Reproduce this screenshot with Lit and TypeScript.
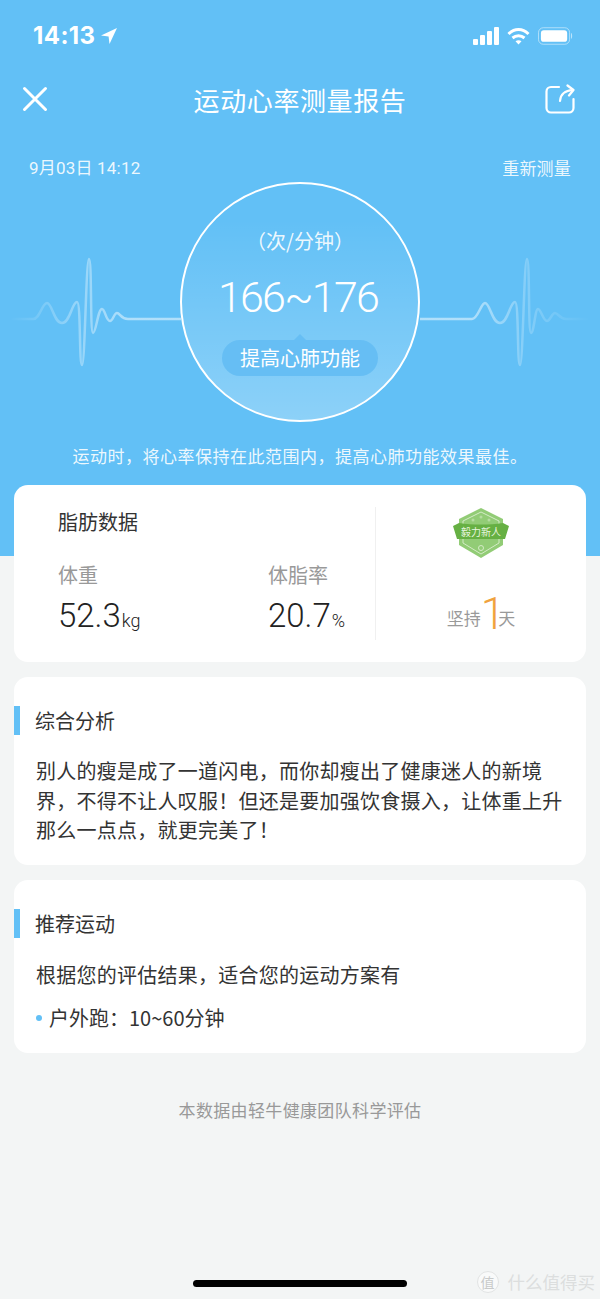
import { LitElement, html, css, svg } from 'lit';
import { customElement } from 'lit/decorators.js';

const ECG_LEFT =
  'M10 319 L33 319 C40 319 42 303 47 303 C52 303 54 323 62 323 C70 323 72 302 77 302 C81 302 79 365 82 365 C85 365 86 259 89 259 C92 259 90 333 93 333 C96 333 98 309 102 309 C105 309 106 321 110 321 C113 321 114 313 117 313 C120 313 121 319 128 319 L181 319';
const ECG_RIGHT =
  'M420 319 L472 319 C478 319 481 303 485 303 C490 303 492 323 500 323 C508 323 510 302 515 302 C519 302 517 365 520 365 C523 365 524 259 527 259 C530 259 528 333 531 333 C534 333 535 309 538 309 C541 309 543 321 547 321 C550 321 552 313 555 313 C558 313 560 319 566 319 L588 319';

@customElement('app-root')
export class AppRoot extends LitElement {
  static styles = css`
    :host {
      display: block;
      position: relative;
      width: 600px;
      height: 1299px;
      overflow: hidden;
      background: #f3f5f5;
      font-family: "Noto Sans CJK SC", "Liberation Sans", sans-serif;
      color: #333;
    }
    .hero {
      height: 556px;
      background: #62c0f6;
      color: #fff;
    }
    .status {
      height: 72px;
      box-sizing: border-box;
      padding: 21px 27px 0 33px;
      display: flex;
      justify-content: space-between;
      align-items: flex-start;
    }
    .clock {
      display: flex;
      align-items: center;
      gap: 6px;
      font: 700 24px/30px Inter, "Liberation Sans", sans-serif;
      letter-spacing: 0.4px;
    }
    .status-icons {
      display: flex;
      align-items: center;
      height: 30px;
    }
    .status-icons .wifi {
      margin: 0 8px 0 7px;
    }
    .nav {
      height: 54px;
      padding: 0 25px 2px;
      display: grid;
      grid-template-columns: 1fr auto 1fr;
      align-items: center;
    }
    .nav .close {
      margin-left: -3px;
    }
    .nav .share {
      justify-self: end;
    }
    .nav h1 {
      margin: 0;
      font-size: 26px;
      font-weight: 400;
      letter-spacing: 0.6px;
    }
    .meta {
      margin-top: 30px;
      height: 20px;
      padding: 0 29px;
      display: flex;
      justify-content: space-between;
      align-items: center;
      font-size: 17px;
      line-height: 20px;
      letter-spacing: 0.2px;
      color: rgba(255, 255, 255, 0.9);
    }
    .meta .date {
      font-family: Roboto, "Noto Sans CJK SC", sans-serif;
    }
    .gauge {
      position: relative;
      margin-top: 4px;
      height: 240px;
      display: flex;
      justify-content: center;
    }
    .ecg {
      position: absolute;
      left: 0;
      top: 0;
      width: 600px;
      height: 240px;
    }
    .dial {
      position: relative;
      width: 240px;
      height: 240px;
      box-sizing: border-box;
      border: 2px solid #fff;
      border-radius: 50%;
      background: linear-gradient(180deg, rgba(255, 255, 255, 0) 15%, rgba(255, 255, 255, 0.27) 100%);
      display: flex;
      flex-direction: column;
      align-items: center;
    }
    .unit {
      margin-top: 43px;
      font-size: 20px;
      line-height: 28px;
      color: rgba(255, 255, 255, 0.9);
    }
    .range {
      margin-top: 14px;
      padding-right: 4px;
      font: 300 43px/56px Roboto, "Liberation Sans", sans-serif;
      letter-spacing: -1.8px;
    }
    .tag {
      position: relative;
      margin-top: 15px;
      width: 156px;
      height: 36px;
      border-radius: 18px;
      background: #66bef4;
      font-size: 20px;
      line-height: 36px;
      text-align: center;
    }
    .tag::before {
      content: '';
      position: absolute;
      left: 72px;
      top: -6px;
      border-left: 6px solid transparent;
      border-right: 6px solid transparent;
      border-bottom: 6px solid #66bef4;
    }
    .hint {
      margin-top: 22px;
      text-align: center;
      font-size: 17px;
      line-height: 24px;
      letter-spacing: 0.5px;
      color: rgba(255, 255, 255, 0.9);
    }
    .cards {
      margin-top: -71px;
      padding: 0 14px;
      display: flex;
      flex-direction: column;
      gap: 15px;
    }
    .card {
      background: #fff;
      border-radius: 14px;
    }
    .fat {
      height: 177px;
      display: flex;
    }
    .fat-main {
      width: 361px;
      box-sizing: border-box;
      padding: 22px 0 0 44px;
    }
    .fat-main h2 {
      margin: 0;
      font-size: 20px;
      line-height: 30px;
      font-weight: 400;
    }
    .stats {
      margin-top: 23px;
      display: flex;
    }
    .stat {
      flex: none;
      width: 210px;
    }
    .stat-label {
      font-size: 20px;
      line-height: 30px;
      color: #999;
    }
    .stat-value {
      margin-top: 5px;
      font: 300 33px/42px Roboto, "Liberation Sans", sans-serif;
      color: #222;
    }
    .stat-value small {
      margin-left: 1px;
      font-size: 18px;
    }
    .streak {
      flex: 1;
      margin: 22px 0;
      border-left: 1px solid #f0f0f0;
      display: flex;
      flex-direction: column;
      align-items: center;
    }
    .days {
      margin-top: 32px;
      display: flex;
      align-items: flex-end;
      color: #999;
      font-size: 17px;
      line-height: 26px;
    }
    .days b {
      font: 300 44px/46px Roboto, "Liberation Sans", sans-serif;
      color: #f0a23e;
      letter-spacing: -7px;
      height: 40px;
    }
    .panel {
      padding: 29px 0 0;
      box-sizing: border-box;
    }
    .panel h3 {
      margin: 0;
      height: 29px;
      border-left: 6px solid #62c0f6;
      padding-left: 15px;
      font-size: 20px;
      line-height: 29px;
      font-weight: 400;
    }
    .panel p {
      margin: 0;
      padding: 0 14px 0 22px;
      font-size: 20px;
      letter-spacing: 0.25px;
    }
    .analysis {
      height: 188px;
    }
    .analysis p {
      margin-top: 21px;
      line-height: 29.5px;
    }
    .advice {
      height: 173px;
    }
    .advice p {
      margin-top: 22px;
      line-height: 30px;
    }
    .advice .item {
      margin: 13px 0 0 22px;
      display: flex;
      align-items: center;
      gap: 7px;
      font-size: 20px;
      line-height: 30px;
    }
    .advice .item::before {
      content: '';
      width: 6px;
      height: 6px;
      border-radius: 50%;
      background: #62c0f6;
    }
    .source {
      margin-top: 45px;
      text-align: center;
      font-size: 17px;
      line-height: 24px;
      letter-spacing: 0.35px;
      color: #999;
    }
    .home-bar {
      position: absolute;
      left: 193px;
      top: 1280px;
      width: 214px;
      height: 7px;
      border-radius: 4px;
      background: #000;
    }
    .watermark {
      position: absolute;
      right: 5px;
      top: 1270px;
      display: flex;
      align-items: center;
      gap: 9px;
      font-size: 17.5px;
      line-height: 24px;
      color: #dcdede;
    }
    .watermark span {
      width: 20px;
      height: 20px;
      border: 1px solid #e2e4e4;
      border-radius: 50%;
      background: #f9fafa;
      color: #c8caca;
      font-size: 14px;
      line-height: 20px;
      text-align: center;
    }
  `;

  private renderStatusIcons() {
    return html`
      <svg width="27" height="18" viewBox="0 0 27 18">
        <rect x="0" y="12" width="5" height="6" rx="1" fill="#fff"></rect>
        <rect x="7" y="8" width="5" height="10" rx="1" fill="#fff"></rect>
        <rect x="14" y="4" width="5" height="14" rx="1" fill="#fff"></rect>
        <rect x="21" y="0" width="5" height="18" rx="1" fill="#fff"></rect>
      </svg>
      <svg class="wifi" width="23" height="17" viewBox="0 0 22 17" fill="none" stroke="#fff" stroke-width="3">
        <path d="M1 6 C7 0 15 0 21 6"></path>
        <path d="M5 10 C8.500 7 13.500 7 17 10"></path>
        <path d="M11 16.500 L8 13.300 C9.800 12 12.200 12 14 13.300 Z" fill="#fff" stroke="none"></path>
      </svg>
      <svg width="35" height="18" viewBox="0 0 36 18">
        <rect x="0.500" y="0.500" width="32" height="17" rx="5" fill="none" stroke="rgba(255,255,255,.5)"></rect>
        <rect x="3" y="3" width="27" height="12" rx="3" fill="#fff"></rect>
        <path d="M34 6 C35.500 6.500 35.500 11.500 34 12 Z" fill="rgba(255,255,255,.6)"></path>
      </svg>
    `;
  }

  private renderEcg() {
    return html`
      <svg class="ecg" viewBox="0 182 600 240" fill="none" stroke-width="2.500" stroke-linejoin="round">
        <defs>
          <linearGradient id="fadeLeft" gradientUnits="userSpaceOnUse" x1="10" y1="0" x2="130" y2="0">
            <stop offset="0" stop-color="#fff" stop-opacity="0"></stop>
            <stop offset="0.5" stop-color="#fff" stop-opacity="0.3"></stop>
            <stop offset="1" stop-color="#fff" stop-opacity="0.5"></stop>
          </linearGradient>
          <linearGradient id="fadeRight" gradientUnits="userSpaceOnUse" x1="590" y1="0" x2="470" y2="0">
            <stop offset="0" stop-color="#fff" stop-opacity="0"></stop>
            <stop offset="0.5" stop-color="#fff" stop-opacity="0.2"></stop>
            <stop offset="1" stop-color="#fff" stop-opacity="0.5"></stop>
          </linearGradient>
        </defs>
        ${svg`<path d=${ECG_LEFT} stroke="url(#fadeLeft)"></path>`}
        ${svg`<path d=${ECG_RIGHT} stroke="url(#fadeRight)"></path>`}
      </svg>
    `;
  }

  private renderBadge() {
    return html`
      <svg width="56" height="52" viewBox="0 0 56 52">
        <path d="M28 1 L50 12 V38 L28 51 L6 38 V12 Z" fill="#92cc76"></path>
        <path d="M28 5 L46 14 V36 L28 47 L10 36 V14 Z" fill="none" stroke="#d4ebc6" stroke-width="1"></path>
        <circle cx="20" cy="13" r="1.500" fill="#b5dca0"></circle>
        <circle cx="28" cy="10" r="1.500" fill="#b5dca0"></circle>
        <circle cx="36" cy="13" r="1.500" fill="#b5dca0"></circle>
        <circle cx="28" cy="41" r="2.500" fill="none" stroke="#d4ebc6"></circle>
        <path d="M0 19 L6 16 C20 18 36 18 50 16 L56 19 L52 32 H4 Z" fill="#66b043"></path>
        <text x="28" y="29" text-anchor="middle" font-size="10" fill="#e8f5df">毅力新人</text>
      </svg>
    `;
  }

  render() {
    return html`
      <section class="hero">
        <div class="status">
          <div class="clock">
            14:13
            <svg width="16" height="16" viewBox="0 0 16 16"><path d="M16 0 L0 7.500 L7.600 8.400 L8.500 16 Z" fill="#fff"></path></svg>
          </div>
          <div class="status-icons">${this.renderStatusIcons()}</div>
        </div>
        <div class="nav">
          <svg class="close" width="26" height="26" viewBox="0 0 26 26" stroke="#fff" stroke-width="3" stroke-linecap="round">
            <path d="M2.500 2.500 L23.500 23.500 M23.500 2.500 L2.500 23.500"></path>
          </svg>
          <h1>运动心率测量报告</h1>
          <svg class="share" width="30" height="30" viewBox="0 0 30 30" fill="none" stroke="#fff" stroke-width="2.200" stroke-linecap="round" stroke-linejoin="round">
            <path d="M14 3 H6 A4.500 4.500 0 0 0 1.500 7.500 V24 A4.500 4.500 0 0 0 6 28.500 H24 A4.500 4.500 0 0 0 28.500 24 V15"></path>
            <path d="M15 17 C15.500 10 20 6.500 28 6"></path>
            <path d="M22.500 1.500 L28.500 6 L24 11.500"></path>
          </svg>
        </div>
        <div class="meta">
          <span class="date">9月03日 14:12</span>
          <span>重新测量</span>
        </div>
        <div class="gauge">
          ${this.renderEcg()}
          <div class="dial">
            <div class="unit">（次/分钟）</div>
            <div class="range">166~176</div>
            <div class="tag">提高心肺功能</div>
          </div>
        </div>
        <div class="hint">运动时，将心率保持在此范围内，提高心肺功能效果最佳。</div>
      </section>

      <div class="cards">
        <section class="card fat">
          <div class="fat-main">
            <h2>脂肪数据</h2>
            <div class="stats">
              <div class="stat">
                <div class="stat-label">体重</div>
                <div class="stat-value">52.3<small>kg</small></div>
              </div>
              <div class="stat">
                <div class="stat-label">体脂率</div>
                <div class="stat-value">20.7<small>%</small></div>
              </div>
            </div>
          </div>
          <div class="streak">
            ${this.renderBadge()}
            <div class="days">坚持<b>1</b>天</div>
          </div>
        </section>

        <section class="card panel analysis">
          <h3>综合分析</h3>
          <p>别人的瘦是成了一道闪电，而你却瘦出了健康迷人的新境界，不得不让人叹服！但还是要加强饮食摄入，让体重上升那么一点点，就更完美了！</p>
        </section>

        <section class="card panel advice">
          <h3>推荐运动</h3>
          <p>根据您的评估结果，适合您的运动方案有</p>
          <div class="item">户外跑：10~60分钟</div>
        </section>
      </div>

      <div class="source">本数据由轻牛健康团队科学评估</div>
      <div class="home-bar"></div>
      <div class="watermark"><span>值</span>什么值得买</div>
    `;
  }
}
